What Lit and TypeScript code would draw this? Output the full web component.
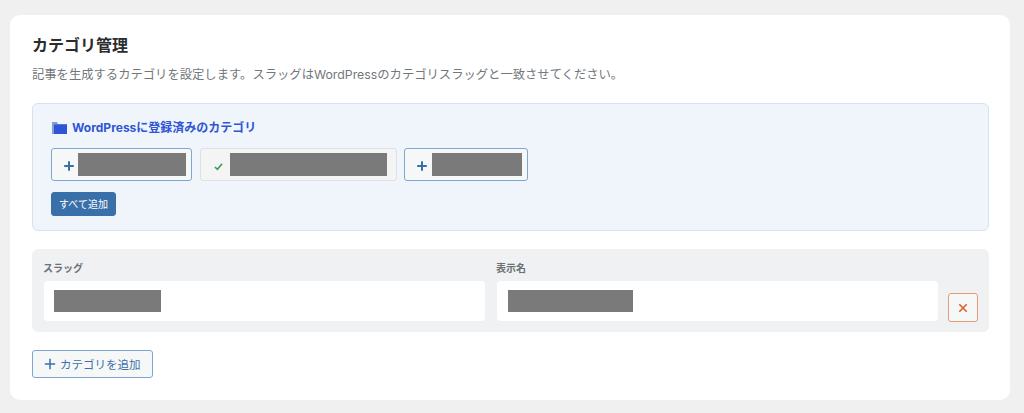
import { LitElement, html, css } from "lit";
import { customElement } from "lit/decorators.js";

const plus = html`<svg viewBox="0 0 12 12" width="12" height="12"><path d="M6 1.2v9.6M1.2 6h9.6" stroke="#3a70aa" stroke-width="2" fill="none"/></svg>`;

@customElement("app-root")
export class AppRoot extends LitElement {
  static styles = css`
    :host { display: block; height: 413px; box-sizing: border-box; background: #f0f0f1; padding: 15px 14px 13px 10px;
      font-family: Inter, "Noto Sans CJK JP", sans-serif; overflow: hidden; }
    * { box-sizing: border-box; }
    .card { background: #fff; border-radius: 10px; height: 385px; padding: 20px 21px 0 22px; }
    h2 { margin: 0; font-size: 16px; line-height: 20px; font-weight: 700; color: #2a2d30; }
    .desc { margin: 11px 0 0; font-size: 12.32px; line-height: 18px; color: #72777c; }
    .panel { margin-top: 19px; height: 128px; background: #f0f5fc; border: 1px solid #d5e2f2; border-radius: 6px; padding: 14px 18px; }
    .panel-title { display: flex; align-items: center; gap: 5px; height: 16px; font-size: 12px; font-weight: 700; color: #2f55d4; }
    .panel-title svg { margin-top: 4px; }
    .chips { display: flex; gap: 7.5px; margin-top: 14px; }
    .chip { display: flex; align-items: center; height: 33px; border: 1px solid #7fa6d3; border-radius: 3px; background: #f6f7f7; padding: 3px 5.2px 0 0; }
    .chip.done { border-color: #dfe0e1; background: #f4f4f4; padding-right: 9px; }
    .chip .ico { display: flex; justify-content: center; width: 26px; padding-left: 7px; flex: none; }
    .chip.done .ico { width: 29px; }
    .chip:nth-child(3) { padding-right: 5px; }
    .chip:nth-child(3) .ico { width: 27px; padding-left: 6px; }
    .mask { display: block; background: #7a7a7a; height: 23px; margin-bottom: 3px; }
    .all { display: block; margin-top: 11px; width: 65px; height: 24px; padding: 0; border: 1px solid #3a70aa; border-radius: 3px;
      background: #3a70aa; color: #fff; font: inherit; font-size: 10px; line-height: 20px; }
    .row { display: flex; align-items: flex-end; margin-top: 18px; height: 83px; background: #f0f1f3; border-radius: 6px; padding: 0 11px 11px 12px; }
    .field { width: 441px; margin-right: 12px; }
    .field:nth-child(2) { margin-right: 10px; }
    .field:nth-child(2) .input { padding-left: 11px; }
    label { display: block; margin-left: -1px; font-size: 10px; line-height: 14px; font-weight: 700; color: #6b7075; margin-bottom: 6px; }
    .input { height: 40px; background: #fff; border-radius: 4px; padding: 9px 10px; }
    .input .mask { margin: 0; height: 22px; }
    .del { display: flex; align-items: center; justify-content: center; width: 30px; height: 29px; padding: 0; margin-bottom: -1px;
      border: 1px solid #e69a75; border-radius: 3px; background: #f6f7f7; }
    .add { display: flex; align-items: center; gap: 4px; margin-top: 18px; width: 121px; height: 28px; padding: 0 0 0 11px;
      border: 1px solid #7fa6d3; border-radius: 3px; background: #f6f7f7; color: #3a70aa; font: inherit; font-size: 11.5px; }
  `;

  render() {
    return html`<div class="card">
      <h2>カテゴリ管理</h2>
      <p class="desc">記事を生成するカテゴリを設定します。スラッグはWordPressのカテゴリスラッグと一致させてください。</p>
      <div class="panel">
        <div class="panel-title">
          <svg viewBox="0 0 16 12" width="16" height="12"><path d="M1 0h5l1 2h9v10H1z" fill="#7f9bd8"/><path d="M3 2.5h13V12H3z" fill="#2f55d4"/></svg>
          <span>WordPressに登録済みのカテゴリ</span>
        </div>
        <div class="chips">
          <div class="chip"><span class="ico">${plus}</span><span class="mask" style="width:108px"></span></div>
          <div class="chip done"><span class="ico"><svg viewBox="0 0 10 10" width="9" height="9"><path d="M1 5.5l2.8 2.6L9 2" stroke="#3f9a4e" stroke-width="1.7" fill="none"/></svg></span><span class="mask" style="width:157px"></span></div>
          <div class="chip"><span class="ico">${plus}</span><span class="mask" style="width:90px"></span></div>
        </div>
        <button class="all">すべて追加</button>
      </div>
      <div class="row">
        <div class="field"><label>スラッグ</label><div class="input"><span class="mask" style="width:107px"></span></div></div>
        <div class="field"><label>表示名</label><div class="input"><span class="mask" style="width:125px"></span></div></div>
        <button class="del"><svg viewBox="0 0 10 10" width="10" height="10"><path d="M1.3 1.3l7.4 7.4M8.7 1.3L1.3 8.7" stroke="#d9602c" stroke-width="1.6" fill="none"/></svg></button>
      </div>
      <button class="add"><svg viewBox="0 0 12 12" width="12" height="12"><path d="M6 .8v10.4M.8 6h10.4" stroke="#3a70aa" stroke-width="1.5" fill="none"/></svg><span>カテゴリを追加</span></button>
    </div>`;
  }
}
